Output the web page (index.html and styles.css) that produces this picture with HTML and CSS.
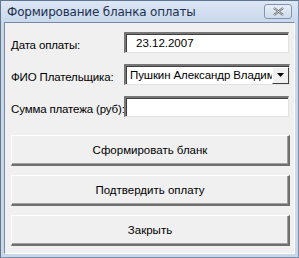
FILE: index.html
```html
<!DOCTYPE html>
<html>
<head>
<meta charset="utf-8">
<link rel="stylesheet" href="styles.css">
</head>
<body>
<div class="window">
  <div class="titlebar">
    <span class="title">Формирование бланка оплаты</span>
    <span class="close">
      <svg width="15" height="9" viewBox="0 0 15 9"><path d="M3 1 L12 8 M12 1 L3 8" stroke="#555" stroke-width="2.2" fill="none"/><path d="M3 1 L12 8 M12 1 L3 8" stroke="#fff" stroke-width="0.8" fill="none"/></svg>
    </span>
  </div>
  <div class="client">
    <div class="row r1">
      <label class="lbl">Дата оплаты:</label>
      <div class="field"><span class="val">23.12.2007</span></div>
    </div>
    <div class="row r2">
      <label class="lbl">ФИО Плательщика:</label>
      <div class="field combo"><span class="val">Пушкин Александр Владим</span><span class="arrow"><svg width="7" height="4" viewBox="0 0 7 4"><path d="M0 0 H7 L3.5 4 Z" fill="#000"/></svg></span></div>
    </div>
    <div class="row r3">
      <label class="lbl">Сумма платежа (руб):</label>
      <div class="field"></div>
    </div>
    <div class="buttons">
      <div class="btn">Сформировать бланк</div>
      <div class="btn">Подтвердить оплату</div>
      <div class="btn">Закрыть</div>
    </div>
  </div>
</div>
</body>
</html>
```
FILE: styles.css
```css
html, body { margin: 0; padding: 0; }
body { width: 299px; height: 258px; overflow: hidden; background: #fff; font-family: "Liberation Sans", Arial, sans-serif; font-size: 11.5px; color: #000; }
.window {
  box-sizing: border-box; width: 299px; height: 258px;
  border: 1px solid #64768e; border-right-color: #7d8fa6; border-bottom-color: #7d8fa6;
  background: #c8d7ea; padding: 0 3px 3px 3px;
  display: flex; flex-direction: column;
}
.titlebar {
  height: 21px; flex: none; display: flex; align-items: center; justify-content: space-between;
  background: linear-gradient(#dce7f5, #c9d8ec);
  margin: 0 -3px; padding: 0 6px 0 6px;
}
.title { font-family: "DejaVu Sans", sans-serif; font-size: 12px; color: #1e3050; letter-spacing: -0.2px; }
.close {
  width: 28px; height: 15px; box-sizing: border-box; border: 1px solid #8193ad; border-radius: 3px;
  background: linear-gradient(#e6eef8, #cfdcec); display: flex; align-items: center; justify-content: center;
}
.client {
  flex: 1; background: #f0f0f0; border: 1px solid #7a8aa0; border-bottom-color: #fff; border-right-color: #fff;
  box-sizing: border-box; padding: 9px 5px 0 6px;
}
.row { display: flex; align-items: center; height: 21px; }
.r2 { margin-top: 11px; }
.r3 { margin-top: 11px; }
.lbl { width: 113px; flex: none; white-space: nowrap; padding-top: 5px; letter-spacing: -0.15px; }
.field {
  box-sizing: border-box; width: 166px; height: 21px; background: #fff;
  border-top: 2px solid #777; border-left: 2px solid #777;
  border-right: 1px solid #e3e3e3; border-bottom: 1px solid #e3e3e3;
  display: flex; align-items: center;
  box-shadow: inset 1px 1px 0 #404040;
}
.val { font-size: 11.5px; padding-left: 10px; flex: 1; white-space: nowrap; overflow: hidden; }
.combo .val { padding-left: 4px; letter-spacing: -0.1px; }
.arrow {
  flex: none; width: 17px; height: 17px; box-sizing: border-box; background: #f0f0f0;
  border-top: 1px solid #fff; border-left: 1px solid #fff; border-right: 1px solid #404040; border-bottom: 1px solid #404040;
  display: flex; align-items: center; justify-content: center;
}
.buttons { display: flex; flex-direction: column; gap: 9px; margin-top: 18px; }
.btn {
  box-sizing: border-box; height: 31px; width: 279px; font-size: 11.5px;
  border-top: 1px solid #fff; border-left: 1px solid #fff;
  border-right: 2px solid #6f6f6f; border-bottom: 2px solid #6f6f6f;
  box-shadow: inset -1px -1px 0 #a0a0a0;
  display: flex; align-items: center; justify-content: center;
}
```
